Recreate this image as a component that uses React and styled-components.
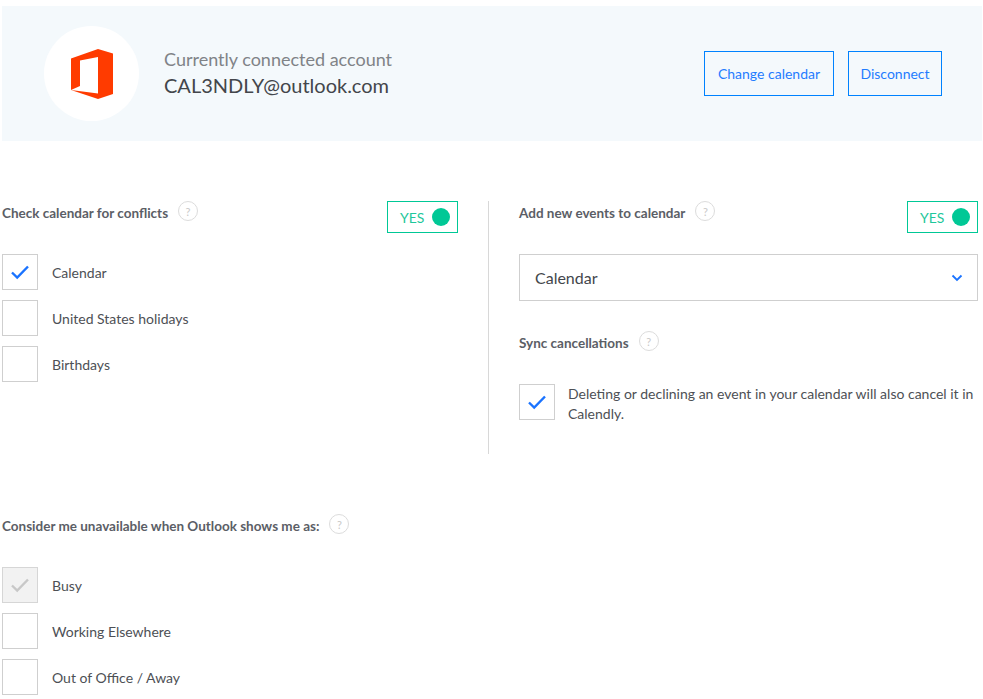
import React from "react";
import styled, { createGlobalStyle } from "styled-components";

const Global = createGlobalStyle`
  html, body { margin: 0; padding: 0; background: #fff; }
  body { font-family: "Lato", "Liberation Sans", sans-serif; color: #4d5055; overflow: hidden; }
  * { box-sizing: border-box; }
`;

const Page = styled.div`
  width: 983px;
  height: 699px;
  padding: 6px 1px 0 2px;
  overflow: hidden;
`;
const Banner = styled.div`
  display: flex;
  align-items: center;
  height: 135px;
  padding: 0 40px 0 42px;
  background: #f4f9fc;
`;
const LogoCircle = styled.div`
  display: flex;
  align-items: center;
  justify-content: center;
  width: 95px;
  height: 95px;
  border-radius: 50%;
  background: #fff;
`;
const Account = styled.div`
  flex: 1;
  margin-left: 25px;
  margin-top: -3px;
`;
const AccountLabel = styled.div`
  font-size: 18px;
  line-height: 26px;
  color: #808387;
`;
const AccountName = styled.div`
  font-size: 20px;
  line-height: 26px;
  color: #43464b;
`;
const OutlineButton = styled.button`
  height: 45px;
  width: ${(p) => p.$width}px;
  margin-left: ${(p) => p.$gap || 0}px;
  border: 1px solid #0082ff;
  border-radius: 0;
  background: transparent;
  color: #1f7cff;
  font: 400 14px "Lato", sans-serif;
  cursor: pointer;
`;
const Columns = styled.div`
  display: flex;
  margin-top: 60px;
  height: 253px;
`;
const LeftCol = styled.div`
  width: 456px;
`;
const Divider = styled.div`
  width: 1px;
  margin: 0 30px;
  background: #d8d8d8;
`;
const RightCol = styled.div`
  width: 459px;
`;
const HeadRow = styled.div`
  display: flex;
  align-items: flex-start;
  justify-content: space-between;
  height: 53px;
`;
const TitleWrap = styled.div`
  display: flex;
  align-items: center;
  height: 24px;
`;
const Title = styled.span`
  font-size: 13.5px;
  font-weight: 700;
  color: #5b5e66;
`;
const Help = styled.span`
  display: flex;
  align-items: center;
  justify-content: center;
  width: 20px;
  height: 20px;
  margin-left: 10px;
  margin-top: -4px;
  border: 1px solid #dcdcdc;
  border-radius: 50%;
  color: #c8c8c8;
  font-size: 11px;
`;
const Toggle = styled.div`
  display: flex;
  align-items: center;
  justify-content: space-between;
  width: 71px;
  height: 32px;
  padding: 0 7px 0 12px;
  border: 1px solid #00c896;
  color: #1fc79b;
  font-size: 14px;
`;
const Dot = styled.span`
  width: 18px;
  height: 18px;
  border-radius: 50%;
  background: #00c896;
`;
const CheckList = styled.div`
  display: flex;
  flex-direction: column;
  gap: 10px;
`;
const CheckRow = styled.div`
  display: flex;
  align-items: center;
  height: 36px;
`;
const Box = styled.span`
  flex: none;
  display: flex;
  align-items: center;
  justify-content: center;
  width: 36px;
  height: 36px;
  border: 1px solid ${(p) => (p.$disabled ? "#d6d6d6" : "#cfcfcf")};
  background: ${(p) => (p.$disabled ? "#f2f2f2" : "#fff")};
`;
const CheckLabel = styled.span`
  margin-left: 14px;
  font-size: 14px;
  color: #4d5055;
`;
const Select = styled.div`
  display: flex;
  align-items: center;
  justify-content: space-between;
  height: 47px;
  padding: 0 14px 0 15px;
  border: 1px solid #cfcfcf;
  font-size: 16px;
  color: #43464b;
`;
const SyncHead = styled(TitleWrap)`
  margin-top: 30px;
`;
const SyncRow = styled.div`
  display: flex;
  margin-top: 29px;
`;
const SyncText = styled.p`
  margin: 0 0 0 13px;
  font-size: 14px;
  line-height: 20px;
  color: #4d5055;
`;
const Lower = styled.div`
  margin-top: 60px;
`;
const LowerHead = styled(TitleWrap)`
  margin-bottom: 29px;
`;

const Check = ({ color = "#1a73ff" }) => (
  <svg width="20" height="16" viewBox="0 0 20 16">
    <path d="M2 8.5 L7.2 13.5 L18 2.5" fill="none" stroke={color} strokeWidth="2.4" />
  </svg>
);

const OfficeLogo = () => (
  <svg width="44" height="50" viewBox="0 0 44 50">
    <path
      fill="#ff3b00"
      d="M1 9.5 L28 0 L43 4.5 V45 L28 50 L1 41 L28 44.5 V8 L10 11.5 V37 L1 41 Z"
    />
  </svg>
);

const Option = ({ label, checked, disabled }) => (
  <CheckRow>
    <Box $disabled={disabled}>
      {checked && <Check color={disabled ? "#c8c8c8" : "#1a73ff"} />}
    </Box>
    <CheckLabel>{label}</CheckLabel>
  </CheckRow>
);

const App = () => (
  <Page>
    <Global />
    <Banner>
      <LogoCircle>
        <OfficeLogo />
      </LogoCircle>
      <Account>
        <AccountLabel>Currently connected account</AccountLabel>
        <AccountName>CAL3NDLY@outlook.com</AccountName>
      </Account>
      <OutlineButton $width={130}>Change calendar</OutlineButton>
      <OutlineButton $width={94} $gap={14}>Disconnect</OutlineButton>
    </Banner>
    <Columns>
      <LeftCol>
        <HeadRow>
          <TitleWrap>
            <Title>Check calendar for conflicts</Title>
            <Help>?</Help>
          </TitleWrap>
          <Toggle>YES<Dot /></Toggle>
        </HeadRow>
        <CheckList>
          <Option label="Calendar" checked />
          <Option label="United States holidays" />
          <Option label="Birthdays" />
        </CheckList>
      </LeftCol>
      <Divider />
      <RightCol>
        <HeadRow>
          <TitleWrap>
            <Title>Add new events to calendar</Title>
            <Help>?</Help>
          </TitleWrap>
          <Toggle>YES<Dot /></Toggle>
        </HeadRow>
        <Select>
          Calendar
          <svg width="12" height="8" viewBox="0 0 12 8">
            <path d="M1.5 1.5 L6 6 L10.5 1.5" fill="none" stroke="#1a73ff" strokeWidth="1.8" />
          </svg>
        </Select>
        <SyncHead>
          <Title>Sync cancellations</Title>
          <Help>?</Help>
        </SyncHead>
        <SyncRow>
          <Box><Check /></Box>
          <SyncText>Deleting or declining an event in your calendar will also cancel it in Calendly.</SyncText>
        </SyncRow>
      </RightCol>
    </Columns>
    <Lower>
      <LowerHead>
        <Title>Consider me unavailable when Outlook shows me as:</Title>
        <Help>?</Help>
      </LowerHead>
      <CheckList>
        <Option label="Busy" checked disabled />
        <Option label="Working Elsewhere" />
        <Option label="Out of Office / Away" />
      </CheckList>
    </Lower>
  </Page>
);

export default App;
